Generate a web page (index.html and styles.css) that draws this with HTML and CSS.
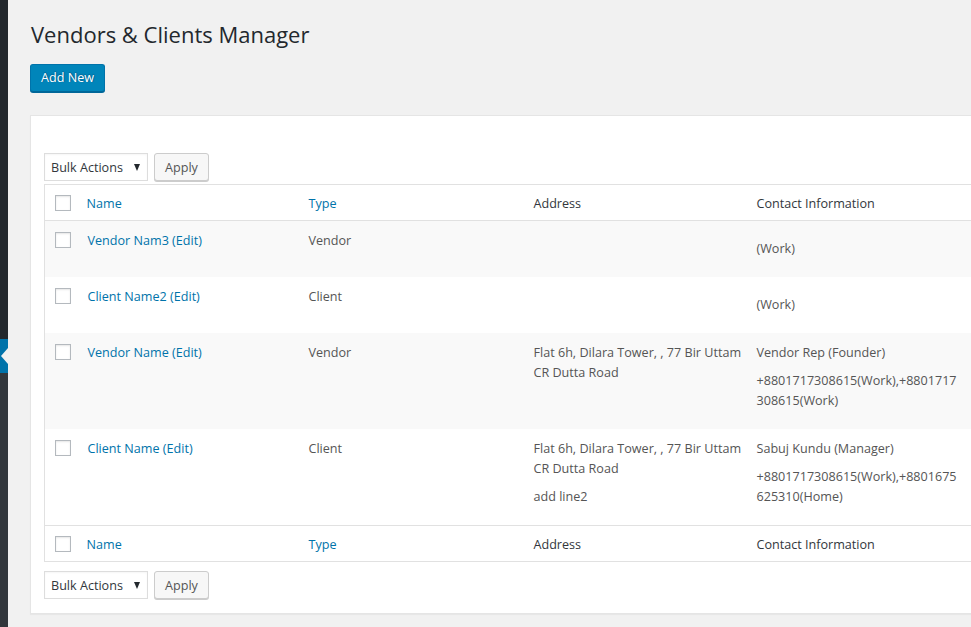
FILE: index.html
```html
<!DOCTYPE html>
<html>
<head>
<meta charset="utf-8">
<link rel="stylesheet" href="styles.css">
</head>
<body>
<div class="layout">
  <aside class="sidebar">
    <div class="sb-top"></div>
    <div class="sb-current"><span class="sb-arrow"></span></div>
    <div class="sb-bottom"></div>
  </aside>
  <main class="main">
    <h1 class="page-title">Vendors &amp; Clients Manager</h1>
    <button class="btn-primary">Add New</button>
    <section class="panel">
      <div class="tablenav top">
        <div class="select">Bulk Actions<span class="caret"></span></div>
        <button class="btn">Apply</button>
      </div>
      <table class="list">
        <colgroup>
          <col class="c-cb"><col class="c-name"><col class="c-type"><col class="c-addr"><col class="c-contact">
        </colgroup>
        <thead>
          <tr>
            <th class="cb"><span class="check"></span></th>
            <th><a class="link">Name</a></th>
            <th><a class="link">Type</a></th>
            <th>Address</th>
            <th>Contact Information</th>
          </tr>
        </thead>
        <tbody>
          <tr class="alt">
            <td class="cb"><span class="check"></span></td>
            <td><a class="link name">Vendor Nam3 (Edit)</a></td>
            <td>Vendor</td>
            <td></td>
            <td><div class="cname"></div><p class="phone">(Work)</p></td>
          </tr>
          <tr>
            <td class="cb"><span class="check"></span></td>
            <td><a class="link name">Client Name2 (Edit)</a></td>
            <td>Client</td>
            <td></td>
            <td><div class="cname"></div><p class="phone">(Work)</p></td>
          </tr>
          <tr class="alt">
            <td class="cb"><span class="check"></span></td>
            <td><a class="link name">Vendor Name (Edit)</a></td>
            <td>Vendor</td>
            <td><div class="nowrap">Flat 6h, Dilara Tower, , 77 Bir Uttam<br>CR Dutta Road</div></td>
            <td><div class="cname">Vendor Rep (Founder)</div><p class="phone">+8801717308615(Work),+8801717<br>308615(Work)</p></td>
          </tr>
          <tr>
            <td class="cb"><span class="check"></span></td>
            <td><a class="link name">Client Name (Edit)</a></td>
            <td>Client</td>
            <td><div class="nowrap">Flat 6h, Dilara Tower, , 77 Bir Uttam<br>CR Dutta Road</div><p class="line2">add line2</p></td>
            <td><div class="cname">Sabuj Kundu (Manager)</div><p class="phone">+8801717308615(Work),+8801675<br>625310(Home)</p></td>
          </tr>
        </tbody>
        <tfoot>
          <tr>
            <th class="cb"><span class="check"></span></th>
            <th><a class="link">Name</a></th>
            <th><a class="link">Type</a></th>
            <th>Address</th>
            <th>Contact Information</th>
          </tr>
        </tfoot>
      </table>
      <div class="tablenav bottom">
        <div class="select">Bulk Actions<span class="caret"></span></div>
        <button class="btn">Apply</button>
      </div>
    </section>
  </main>
</div>
</body>
</html>
```

FILE: styles.css
```css
html, body {
  margin: 0;
  padding: 0;
  background: #f1f1f1;
  overflow: hidden;
}
body {
  width: 971px;
  height: 627px;
  font-family: "Open Sans", "Noto Sans", "Liberation Sans", sans-serif;
  font-size: 12.6px;
  color: #444;
}
.layout {
  display: flex;
  height: 627px;
}
.sidebar {
  width: 8px;
  flex: 0 0 8px;
  display: flex;
  flex-direction: column;
}
.sb-top {
  height: 339px;
  background: #23282d;
}
.sb-current {
  height: 34px;
  background: #0073aa;
  position: relative;
}
.sb-arrow {
  position: absolute;
  right: 0;
  top: 9px;
  width: 0;
  height: 0;
  border-top: 8px solid transparent;
  border-bottom: 8px solid transparent;
  border-right: 7px solid #f1f1f1;
}
.sb-bottom {
  flex: 1;
  background: #32373c;
}
.main {
  flex: 1;
  padding: 20px 0 0 22px;
  min-width: 0;
}
.page-title {
  margin: 0 0 15px 0;
  font-size: 22px;
  line-height: 29px;
  font-weight: 400;
  color: #23282d;
  padding-left: 1px;
}
.btn-primary {
  display: block;
  width: 75px;
  height: 28px;
  padding: 0 0 1px;
  font-family: inherit;
  font-size: 12.6px;
  color: #fff;
  background: #0085ba;
  border: 1px solid #0073aa;
  border-bottom-color: #006799;
  border-radius: 3px;
  box-shadow: 0 1px 0 #006799;
  text-shadow: 0 -1px 1px #006799, 1px 0 1px #006799;
  margin: 0 0 23px 0;
}
.panel {
  width: 1000px;
  background: #fff;
  border: 1px solid #e5e5e5;
  box-shadow: 0 1px 1px rgba(0,0,0,.04);
  padding: 37px 13px 14px;
}
.tablenav {
  display: flex;
  gap: 6px;
  height: 28px;
}
.tablenav.top { margin-bottom: 3px; }
.tablenav.bottom { margin-top: 9px; }
.select {
  width: 104px;
  height: 28px;
  box-sizing: border-box;
  border: 1px solid #ddd;
  background: #fff;
  color: #32373c;
  padding: 0 0 0 6px;
  line-height: 28px;
  position: relative;
  box-shadow: inset 0 1px 2px rgba(0,0,0,.04);
}
.caret {
  position: absolute;
  right: 7px;
  top: 10px;
  width: 0;
  height: 0;
  border-left: 3.5px solid transparent;
  border-right: 3.5px solid transparent;
  border-top: 7px solid #23282d;
}
.btn {
  height: 28px;
  box-sizing: border-box;
  padding: 1px 0 0;
  font-family: inherit;
  font-size: 12.6px;
  color: #555;
  background: #f7f7f7;
  border: 1px solid #ccc;
  border-radius: 3px;
  box-shadow: 0 1px 0 #ccc;
  width: 55px;
}
.list {
  width: 1000px;
  table-layout: fixed;
  border-collapse: collapse;
  border: 1px solid #e1e1e1;
}
.c-cb { width: 32px; }
.c-name { width: 222px; }
.c-type { width: 225px; }
.c-addr { width: 223px; }
.list th {
  text-align: left;
  font-weight: 400;
  color: #32373c;
  padding: 9px 10px 7px;
  line-height: 19px;
  font-size: 12.6px;
}
.list thead th { border-bottom: 1px solid #e1e1e1; }
.list tfoot th { border-top: 1px solid #e1e1e1; }
.list td {
  vertical-align: top;
  padding: 10px 10px 8px;
  line-height: 20px;
  color: #555;
  font-size: 12.6px;
}
.nowrap { white-space: nowrap; }
.list tr.alt td { background: #f9f9f9; }
.list .cb {
  padding-left: 10px;
  padding-right: 0;
}
.list th.cb { vertical-align: top; padding-top: 10px; }
.check {
  display: block;
  width: 16px;
  height: 16px;
  box-sizing: border-box;
  border: 1px solid #b4b9be;
  background: #fff;
  box-shadow: inset 0 1px 2px rgba(0,0,0,.1);
}
.list td.cb .check { margin-top: 1px; }
.link {
  color: #0073aa;
  text-decoration: none;
}
.name { padding-left: 1px; }
.phone {
  margin: 8px 0 10px;
}
.line2 {
  margin: 8px 0 0;
}
```
